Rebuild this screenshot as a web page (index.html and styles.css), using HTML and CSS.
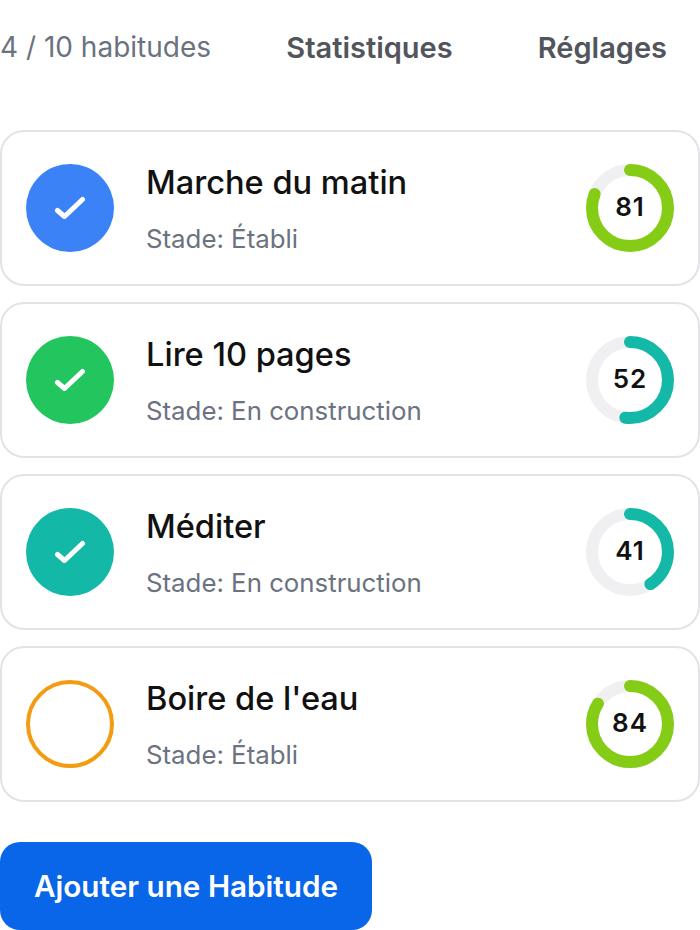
FILE: index.html
```html
<!DOCTYPE html>
<html lang="fr">
<head>
<meta charset="utf-8">
<title>Habitudes</title>
<link rel="stylesheet" href="styles.css">
</head>
<body>
<header class="top">
  <span class="count">4 / 10 habitudes</span>
  <nav class="nav"><a class="nav-link">Statistiques</a><a class="nav-link">Réglages</a></nav>
</header>
<main class="list">
  <article class="card">
    <div class="status status-blue"><svg class="check" viewBox="0 0 32 24"><path d="M3.5 14.5l7 6L28.5 3.5"/></svg></div>
    <div class="info"><h2 class="name">Marche du matin</h2><p class="stage">Stade: Établi</p></div>
    <div class="ring"><svg class="ring-svg" viewBox="0 0 88 88"><circle class="track" cx="44" cy="44" r="38"/><circle class="arc arc-lime" cx="44" cy="44" r="38" pathLength="100" stroke-dasharray="81 100"/></svg><span class="score">81</span></div>
  </article>
  <article class="card">
    <div class="status status-green"><svg class="check" viewBox="0 0 32 24"><path d="M3.5 14.5l7 6L28.5 3.5"/></svg></div>
    <div class="info"><h2 class="name">Lire 10 pages</h2><p class="stage">Stade: En construction</p></div>
    <div class="ring"><svg class="ring-svg" viewBox="0 0 88 88"><circle class="track" cx="44" cy="44" r="38"/><circle class="arc arc-teal" cx="44" cy="44" r="38" pathLength="100" stroke-dasharray="52 100"/></svg><span class="score">52</span></div>
  </article>
  <article class="card">
    <div class="status status-teal"><svg class="check" viewBox="0 0 32 24"><path d="M3.5 14.5l7 6L28.5 3.5"/></svg></div>
    <div class="info"><h2 class="name">Méditer</h2><p class="stage">Stade: En construction</p></div>
    <div class="ring"><svg class="ring-svg" viewBox="0 0 88 88"><circle class="track" cx="44" cy="44" r="38"/><circle class="arc arc-teal" cx="44" cy="44" r="38" pathLength="100" stroke-dasharray="41 100"/></svg><span class="score">41</span></div>
  </article>
  <article class="card">
    <div class="status status-open"></div>
    <div class="info"><h2 class="name">Boire de l'eau</h2><p class="stage">Stade: Établi</p></div>
    <div class="ring"><svg class="ring-svg" viewBox="0 0 88 88"><circle class="track" cx="44" cy="44" r="38"/><circle class="arc arc-lime" cx="44" cy="44" r="38" pathLength="100" stroke-dasharray="84 100"/></svg><span class="score">84</span></div>
  </article>
</main>
<button class="add" type="button">Ajouter une Habitude</button>
</body>
</html>
```
FILE: styles.css
```css
* { box-sizing: border-box; }
html, body { margin: 0; padding: 0; }
body {
  width: 700px;
  height: 930px;
  overflow: hidden;
  background: #fff;
  font-family: Inter, "Liberation Sans", sans-serif;
}
.top {
  display: flex;
  align-items: center;
  height: 130px;
  padding: 0 33px 36px 0;
}
.count { font-size: 28px; line-height: 34px; color: #6b7280; }
.nav { display: flex; gap: 85px; margin-left: auto; }
.nav-link { font-size: 29px; line-height: 34px; font-weight: 600; color: #52555c; position: relative; top: 1px; }
.list { display: flex; flex-direction: column; gap: 16px; }
.card {
  display: flex;
  align-items: center;
  height: 156px;
  padding: 0 24px;
  border: 2px solid #e2e3e6;
  border-radius: 24px;
}
.status {
  flex: none;
  display: flex;
  align-items: center;
  justify-content: center;
  width: 88px;
  height: 88px;
  border-radius: 50%;
}
.status-blue { background: #3b82f6; }
.status-green { background: #22c55e; }
.status-teal { background: #14b8a6; }
.status-open { border: 4px solid #f39c12; }
.check { width: 32px; height: 24px; fill: none; stroke: #fff; stroke-width: 5px; stroke-linecap: round; stroke-linejoin: round; }
.info { flex: 1; margin-left: 32px; padding-top: 1px; }
.name { margin: 0; font-size: 32.6px; line-height: 40px; font-weight: 500; color: #111; }
.stage { margin: 21px 0 0; font-size: 25.8px; line-height: 32px; color: #6b7280; }
.ring { flex: none; position: relative; display: flex; align-items: center; justify-content: center; width: 88px; height: 88px; }
.ring-svg { position: absolute; inset: 0; width: 88px; height: 88px; transform: rotate(-90deg); }
.track, .arc { fill: none; stroke-width: 12; }
.track { stroke: #f0f0f2; }
.arc { stroke-linecap: round; }
.arc-lime { stroke: #84cc16; }
.arc-teal { stroke: #14b8a6; }
.score { position: relative; font-size: 26px; line-height: 32px; font-weight: 600; color: #111; letter-spacing: 1px; top: -1px; }
.add {
  display: block;
  width: 372px;
  height: 88px;
  margin: 40px 0 0;
  padding: 0;
  border: 0;
  border-radius: 20px;
  background: #0a66e8;
  color: #fff;
  font: 600 29.7px/36px Inter, "Liberation Sans", sans-serif;
}
```
